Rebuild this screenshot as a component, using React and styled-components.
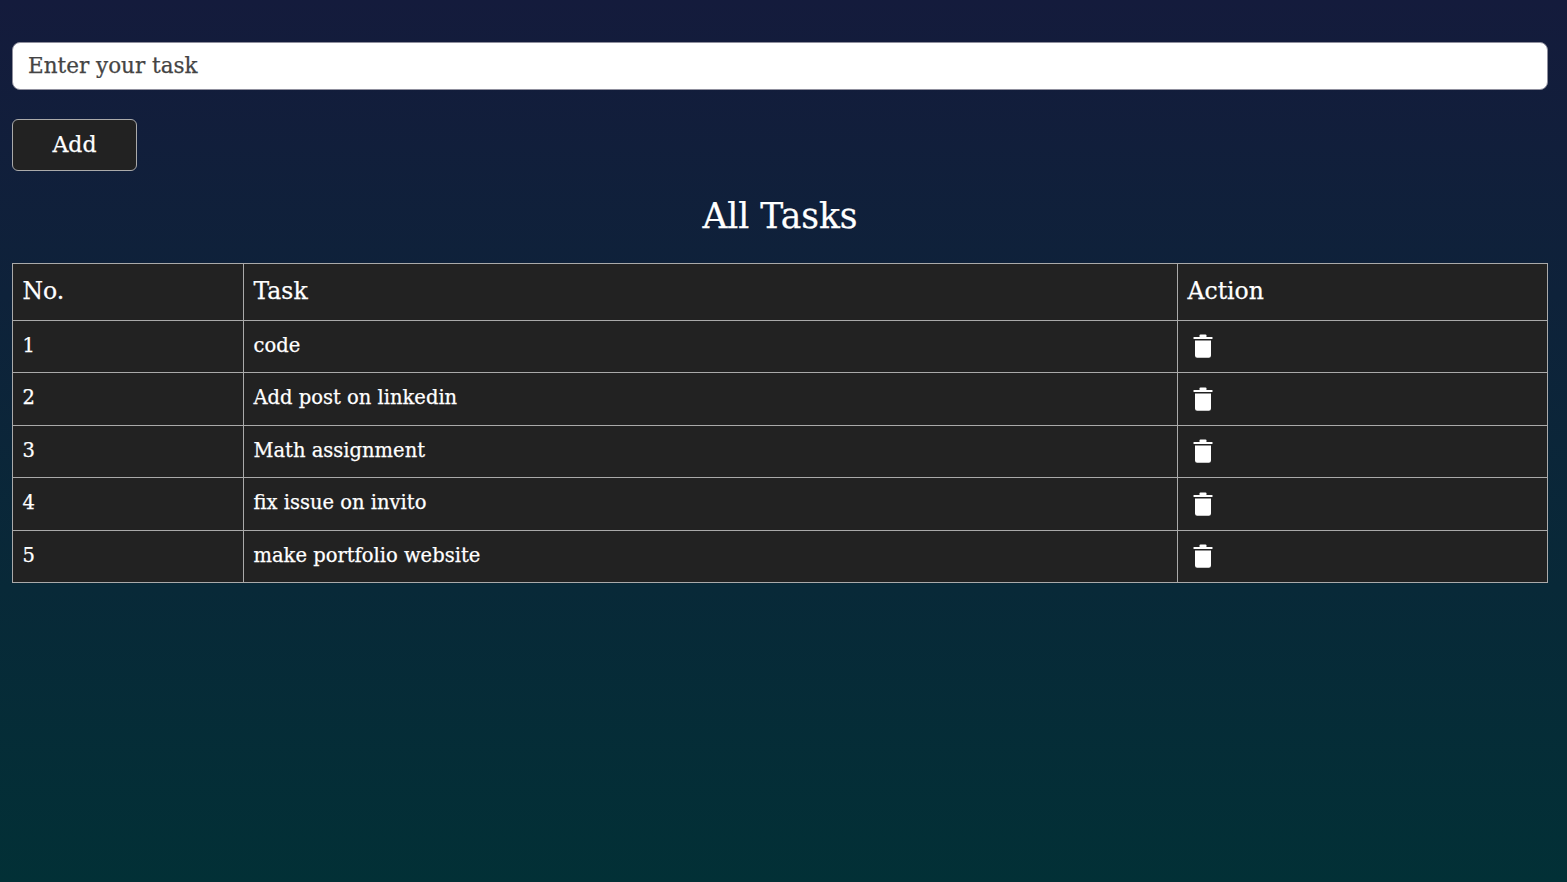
import styled, { createGlobalStyle } from "styled-components";

const tasks = [
    "code",
    "Add post on linkedin",
    "Math assignment",
    "fix issue on invito",
    "make portfolio website",
];

function TrashIcon() {
    return (
        <svg width="20" height="24" viewBox="0 0 20 24" fill="#fff">
            <rect x="0.5" y="3" width="19" height="2" rx="0.5" />
            <rect x="6.5" y="0.5" width="7" height="3" rx="1" />
            <path d="M2 6.5h16v15a2.2 2.2 0 0 1-2.2 2.2H4.2A2.2 2.2 0 0 1 2 21.5z" />
        </svg>
    );
}

function App() {
    return (
        <Page>
            <GlobalStyle />
            <TaskInput placeholder="Enter your task" type="text" />
            <AddButton>Add</AddButton>
            <Title>All Tasks</Title>
            <TaskTable>
                <colgroup>
                    <col style={{ width: 231 }} />
                    <col style={{ width: 934 }} />
                    <col />
                </colgroup>
                <thead>
                    <tr>
                        <HeadCell>No.</HeadCell>
                        <HeadCell>Task</HeadCell>
                        <HeadCell>Action</HeadCell>
                    </tr>
                </thead>
                <tbody>
                    {tasks.map((task, i) => (
                        <tr key={task}>
                            <Cell>{i + 1}</Cell>
                            <Cell>{task}</Cell>
                            <Cell>
                                <DeleteButton aria-label="delete">
                                    <TrashIcon />
                                </DeleteButton>
                            </Cell>
                        </tr>
                    ))}
                </tbody>
            </TaskTable>
        </Page>
    );
}

export default App;

const GlobalStyle = createGlobalStyle`
  html, body {
    margin: 0;
    padding: 0;
  }

  * {
    box-sizing: border-box;
    font-family: "DejaVu Serif", "Liberation Serif", serif;
    -webkit-text-stroke: 0.25px;
  }
`;

const Page = styled.div`
  width: 100%;
  height: 882px;
  padding: 42px 19px 0 12px;
  background: linear-gradient(180deg, #141b3c 0%, #023036 100%);
  overflow: hidden;
`;

const TaskInput = styled.input`
  display: block;
  width: 100%;
  height: 48px;
  padding: 0 15px 2px;
  border: 1px solid #8f8f9d;
  border-radius: 8px;
  background: #fff;
  font-size: 21.5px;
  outline: none;

  &::placeholder {
    color: #444;
  }
`;

const AddButton = styled.button`
  display: block;
  width: 125px;
  height: 52px;
  margin-top: 29px;
  padding: 0 0 2px;
  border: 1px solid #aaa;
  border-radius: 6px;
  background: #222;
  color: #fff;
  font-size: 22px;
`;

const Title = styled.h1`
  margin: 24px 0 26px;
  color: #fff;
  font-size: 34.5px;
  font-weight: 400;
  line-height: 42px;
  text-align: center;
`;

const TaskTable = styled.table`
  width: 100%;
  border-collapse: collapse;
  table-layout: fixed;
  background: #222;
  color: #fff;
`;

const HeadCell = styled.th`
  height: 56.5px;
  padding: 0 9.5px 2px;
  border: 1px solid #aaa;
  font-size: 23.5px;
  font-weight: 400;
  text-align: left;
`;

const Cell = styled.td`
  height: 52.5px;
  padding: 0 9.5px 2px;
  border: 1px solid #aaa;
  font-size: 19.5px;
`;

const DeleteButton = styled.button`
  display: flex;
  align-items: center;
  padding: 2px 5px 0;
  border: none;
  background: none;
`;
